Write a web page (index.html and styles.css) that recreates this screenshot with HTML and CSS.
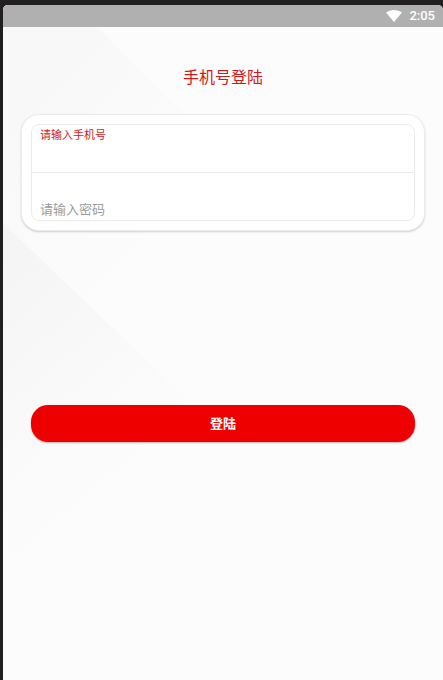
FILE: index.html
```
<!DOCTYPE html>
<html lang="zh-CN">
<head>
  <meta charset="UTF-8">
  <meta name="viewport" content="width=device-width, initial-scale=1">
  <title>手机号登陆</title>
  <link rel="stylesheet" href="styles.css">
</head>
<body>

<div class="screen">
  <svg class="backdrop" viewBox="0 0 440 675" preserveAspectRatio="xMinYMin slice" aria-hidden="true">
    <defs>
      <linearGradient id="fadeTop" gradientUnits="userSpaceOnUse" x1="60" y1="60" x2="190" y2="190">
        <stop offset="0" stop-color="#f8f8f8"/>
        <stop offset="1" stop-color="#fcfcfc"/>
      </linearGradient>
      <linearGradient id="fadeLeft" gradientUnits="userSpaceOnUse" x1="0" y1="260" x2="150" y2="440">
        <stop offset="0" stop-color="#f5f5f5"/>
        <stop offset="1" stop-color="#fcfcfc"/>
      </linearGradient>
    </defs>
    <path d="M0 0H72L250 178L200 418L0 218Z" fill="url(#fadeTop)"/>
    <path d="M0 218L182 392L0 600Z" fill="url(#fadeLeft)"/>
  </svg>

  <header class="status-bar">
    <svg class="wifi" viewBox="0 0 16 12" aria-hidden="true">
      <path d="M8 12L0 2.6C4.6-.8 11.4-.8 16 2.6Z" fill="#fff"/>
    </svg>
    <span>2:05</span>
  </header>

  <main>
    <h1>手机号登陆</h1>

    <form id="loginForm">
      <div class="card">
        <div class="fields">
          <div class="field">
            <label for="phone">请输入手机号</label>
            <input type="tel" id="phone">
          </div>
          <div class="field">
            <input type="password" id="password" placeholder="请输入密码" aria-label="请输入密码">
          </div>
        </div>
      </div>

      <button type="submit">登陆</button>
    </form>
  </main>
</div>

</body>
</html>
```

FILE: styles.css
```
* { box-sizing: border-box; }
body { margin: 0; padding: 5px 0 0 3px; min-height: 100vh; display: flex; background: #211f20; font-family: Roboto, "Noto Sans CJK SC", sans-serif; }

.screen { position: relative; flex: 1; background: #fcfcfc; border-radius: 5px 5px 0 0; overflow: hidden; }
.backdrop { position: absolute; top: 0; left: 0; width: 100%; height: 100%; }

.status-bar { position: relative; display: flex; justify-content: flex-end; align-items: center; gap: 7px; height: 22px; padding: 0 8px; background: #b0b0b0; color: white; font-size: 13px; font-weight: 500; line-height: 24px; }
.wifi { width: 16px; height: 12px; }

main { position: relative; padding: 39px 18px; }
h1 { margin: 0 0 24px; color: #d0181c; font-size: 16px; font-weight: 400; line-height: 24px; text-align: center; }

.card { padding: 9px; background: white; border: 1px solid #ececec; border-radius: 18px; box-shadow: 0 1px 2px rgba(0, 0, 0, 0.18); }
.fields { border: 1px solid #ebebeb; border-radius: 8px; overflow: hidden; }
.field { display: flex; flex-direction: column; justify-content: flex-end; height: 47px; padding: 0 8px; }
.field + .field { height: 48px; border-top: 1px solid #ebebeb; }
label { color: #d0181c; font-size: 11px; line-height: 22px; }
input { width: 100%; height: 22px; padding: 0; border: none; outline: none; background: transparent; font-family: inherit; font-size: 13px; color: #333; }
.field:first-child input { height: 25px; }
input::placeholder { color: #9b9b9b; opacity: 1; }

button { display: block; width: calc(100% - 20px); height: 37px; margin: 174px auto 0; padding: 0 0 2px; background: #ee0000; color: white; border: none; border-radius: 17px; box-shadow: 0 1px 2px rgba(0, 0, 0, 0.3); font-family: inherit; font-size: 13px; font-weight: 700; cursor: pointer; }
```
